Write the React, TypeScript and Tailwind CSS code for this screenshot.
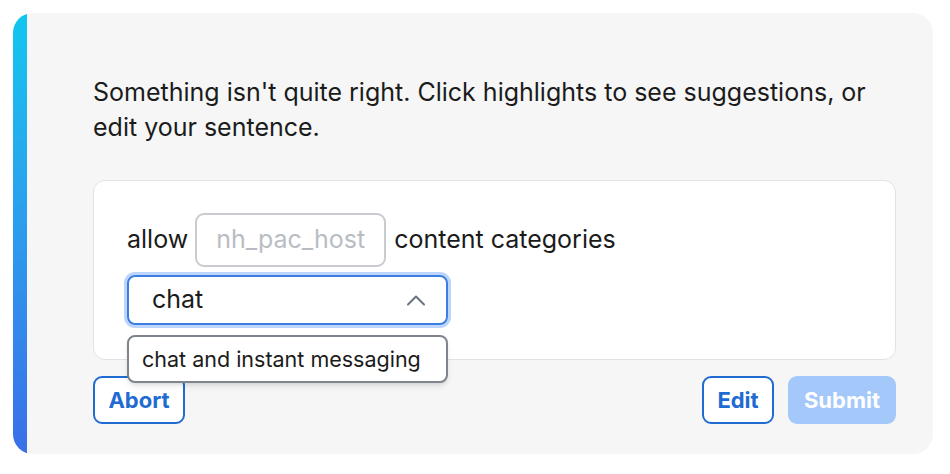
const Chevron = () => (
    <svg width="20" height="12" viewBox="0 0 20 12" fill="none" aria-hidden>
        <polyline points="2,10.5 10,2.5 18,10.5" stroke="#6b7280" strokeWidth="2" strokeLinecap="round" strokeLinejoin="round" />
    </svg>
)

const App = () => {
    return <div className="w-[950px] h-[474px] bg-white p-[13px] font-['Inter',sans-serif] text-[#1b1b1b]">
        <div className="flex h-[441px] w-[920px] overflow-hidden rounded-[20px] bg-[#f6f6f6]">
            <div className="w-[14px] shrink-0 bg-linear-to-b from-[#0fc6ef] to-[#3a6ee8]" />
            <div className="flex-1 pl-[66px] pr-[37px] pt-[62px]">
                <p className="text-[25px] leading-[35px]">
                    Something isn't quite right. Click highlights to see suggestions, or edit your sentence.
                </p>
                <div className="relative mt-[35px] rounded-xl border border-[#e2e2e6] bg-white pl-[33px] pt-[32px] pb-[34px]">
                    <div className="flex items-center text-[25px]">
                        <span>allow</span>
                        <div className="ml-[7px] mr-[8px] flex h-[54px] w-[191px] items-center rounded-[9px] border-2 border-[#c8cbd0] px-[19px] text-[25px] text-[#b9bdc3]">
                            nh_pac_host
                        </div>
                        <span>content categories</span>
                    </div>
                    <div className="mt-[8px] flex h-[50px] w-[321px] items-center justify-between rounded-[8px] border-2 border-[#3b7de3] pl-[23px] pr-[20px] text-[25px] ring-[3px] ring-[#bcd5fa]">
                        <span>chat</span>
                        <Chevron />
                    </div>
                    <div className="absolute left-[33px] top-[154px] z-10 flex h-[48px] w-[321px] items-center rounded-[8px] border-2 border-[#7e858d] bg-white px-[13px] text-[21.5px] shadow-md">
                        chat and instant messaging
                    </div>
                </div>
                <div className="mt-[16px] flex items-center justify-between">
                    <button className="h-[48px] w-[92px] rounded-[9px] border-2 border-[#1f6bd1] bg-white text-[22px] font-bold text-[#1f6bd1]">
                        Abort
                    </button>
                    <div className="flex items-center gap-[14px]">
                        <button className="h-[48px] w-[72px] rounded-[9px] border-2 border-[#1f6bd1] bg-white text-[22px] font-bold text-[#1f6bd1]">
                            Edit
                        </button>
                        <button className="h-[48px] w-[108px] rounded-[9px] bg-[#a5c8fb] text-[22px] font-bold text-white">
                            Submit
                        </button>
                    </div>
                </div>
            </div>
        </div>
    </div>
}

export default App
